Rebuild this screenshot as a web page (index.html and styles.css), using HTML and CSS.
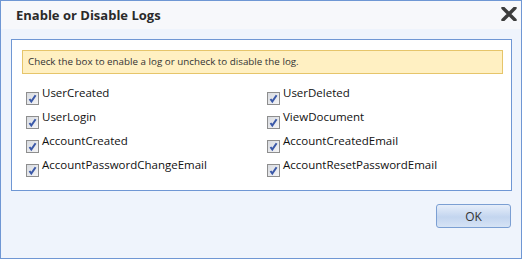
FILE: index.html
```html
<!DOCTYPE html>
<html lang="en">
<head>
    <meta charset="UTF-8" />
    <title>Enable or Disable Logs</title>
    <link rel="stylesheet" href="styles.css">
</head>
<body>
<div class="dialog">
    <div class="dialog-header">
        <h2>Enable or Disable Logs</h2>
        <span class="close" title="Close">
            <svg width="16" height="14" viewBox="0 0 16 14">
                <path d="M2 1 L14 13 M14 1 L2 13" stroke="#3c3c3c" stroke-width="3.4" stroke-linecap="round"/>
            </svg>
        </span>
    </div>

    <div class="panel">
        <div class="notice">Check the box to enable a log or uncheck to disable the log.</div>
        <div class="log-list">
            <label class="log"><span class="box"></span>UserCreated</label>
            <label class="log"><span class="box"></span>UserDeleted</label>
            <label class="log"><span class="box"></span>UserLogin</label>
            <label class="log"><span class="box"></span>ViewDocument</label>
            <label class="log"><span class="box"></span>AccountCreated</label>
            <label class="log"><span class="box"></span>AccountCreatedEmail</label>
            <label class="log"><span class="box"></span>AccountPasswordChangeEmail</label>
            <label class="log"><span class="box"></span>AccountResetPasswordEmail</label>
        </div>
    </div>

    <div class="dialog-footer">
        <button type="button">OK</button>
    </div>
</div>

<script>
    document.querySelectorAll('.box').forEach(box => {
      box.innerHTML = '<svg width="11" height="11" viewBox="0 0 11 11">' +
        '<path d="M2.5 6 L4.3 8.6 L8.6 2.2" fill="none" stroke="#3a58a8" stroke-width="2"/></svg>';
    });
</script>
</body>
</html>
```

FILE: styles.css
```css
body {
  margin: 0;
  font-family: 'Open Sans', 'Noto Sans', sans-serif;
  color: #222;
}
.dialog {
  width: 522px;
  height: 259px;
  box-sizing: border-box;
  border: 1px solid #6f97d4;
  background: #eff4fc;
}
.dialog-header {
  height: 28px;
  background: #f7f8fb;
  display: flex;
  justify-content: space-between;
  align-items: center;
  padding: 0 4px 0 15px;
}
.dialog-header h2 {
  margin: 0;
  font-size: 13px;
  font-weight: 700;
  color: #2a2a2a;
}
.close {
  display: flex;
  margin-top: -3px;
}
.panel {
  margin: 10px 9px 0 10px;
  height: 152px;
  box-sizing: border-box;
  border: 1px solid #6f97d4;
  background: #fff;
  padding: 10px 8px 0 10px;
}
.notice {
  height: 24px;
  box-sizing: border-box;
  border: 1px solid #e6c56a;
  background: #fff0c2;
  font-size: 9.8px;
  color: #333;
  padding-left: 5px;
  line-height: 22px;
}
.log-list {
  display: grid;
  grid-template-columns: 241px 1fr;
  grid-auto-rows: 24px;
  padding: 11px 0 0 4px;
}
.log {
  display: flex;
  align-items: flex-start;
  font-size: 11.5px;
  color: #111;
  line-height: 16px;
}
.box {
  width: 13px;
  height: 13px;
  box-sizing: border-box;
  border: 1px solid #8e8e8e;
  background: linear-gradient(135deg, #d8dbe0, #f4f4f6);
  margin: 7px 3px 0 0;
  display: flex;
  align-items: center;
  justify-content: center;
}
.box svg {
  flex: none;
}
.dialog-footer {
  display: flex;
  justify-content: flex-end;
  padding: 13px 10px 0 0;
}
button {
  width: 75px;
  height: 24px;
  border: 1px solid #7b9fd3;
  border-radius: 3px;
  background: linear-gradient(#e6eefa, #c3d5ef 55%, #d6e3f5);
  font-family: inherit;
  font-size: 12px;
  color: #333;
  cursor: pointer;
}
```
